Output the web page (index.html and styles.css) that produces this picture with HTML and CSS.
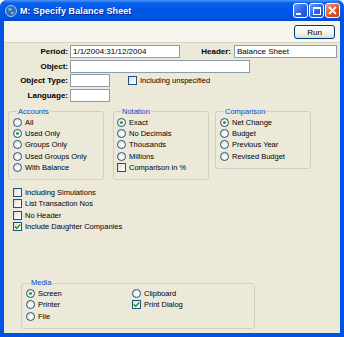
FILE: index.html
```html
<!DOCTYPE html>
<html lang="en">
<head>
    <meta charset="UTF-8">
    <title>M: Specify Balance Sheet</title>
    <link rel="stylesheet" href="styles.css">
</head>
<body>
    <div class="window">
        <div class="titlebar">
            <svg class="app-icon" width="12" height="12" viewBox="0 0 12 12">
                <circle cx="6" cy="6" r="5.5" fill="#2f6fb8" stroke="#cfe0f5" stroke-width="0.8"/>
                <path d="M3 4 Q5 2 7 4 Q6 6 4 6 Z M6 7 Q8 6 9 8 Q7 10 6 9 Z" fill="#7fb6e0"/>
            </svg>
            <span class="title">M: Specify Balance Sheet</span>
            <div class="tbtns">
                <span class="tbtn"><span class="min-glyph"></span></span>
                <span class="tbtn"><span class="max-glyph"></span></span>
                <span class="tbtn close">
                    <svg width="9" height="9" viewBox="0 0 9 9"><path d="M1 1 L8 8 M8 1 L1 8" stroke="#fff" stroke-width="1.8"/></svg>
                </span>
            </div>
        </div>
        <div class="frame">
            <div class="toolbar">
                <button class="btn">Run</button>
            </div>
            <div class="content">
                <div class="fields">
                    <label class="lbl">Period:</label>
                    <div class="row">
                        <input class="inp w-period" type="text" value="1/1/2004:31/12/2004">
                        <label class="lbl grow">Header:</label>
                        <input class="inp w-header" type="text" value="Balance Sheet">
                    </div>
                    <label class="lbl">Object:</label>
                    <div class="row"><input class="inp w-object" type="text"></div>
                    <label class="lbl">Object Type:</label>
                    <div class="row">
                        <input class="inp w-small" type="text">
                        <span class="opt unspec"><span class="chk"></span>Including unspecified</span>
                    </div>
                    <label class="lbl">Language:</label>
                    <div class="row"><input class="inp w-small" type="text"></div>
                </div>

                <div class="groups">
                    <fieldset class="box accounts">
                        <legend>Accounts</legend>
                        <span class="opt"><span class="rad"></span>All</span>
                        <span class="opt"><span class="rad on"></span>Used Only</span>
                        <span class="opt"><span class="rad"></span>Groups Only</span>
                        <span class="opt"><span class="rad"></span>Used Groups Only</span>
                        <span class="opt"><span class="rad"></span>With Balance</span>
                    </fieldset>
                    <fieldset class="box notation">
                        <legend>Notation</legend>
                        <span class="opt"><span class="rad on"></span>Exact</span>
                        <span class="opt"><span class="rad"></span>No Decimals</span>
                        <span class="opt"><span class="rad"></span>Thousands</span>
                        <span class="opt"><span class="rad"></span>Millions</span>
                        <span class="opt"><span class="chk"></span>Comparison in %</span>
                    </fieldset>
                    <fieldset class="box comparison">
                        <legend>Comparison</legend>
                        <span class="opt"><span class="rad on"></span>Net Change</span>
                        <span class="opt"><span class="rad"></span>Budget</span>
                        <span class="opt"><span class="rad"></span>Previous Year</span>
                        <span class="opt"><span class="rad"></span>Revised Budget</span>
                    </fieldset>
                </div>

                <div class="checks">
                    <span class="opt"><span class="chk"></span>Including Simulations</span>
                    <span class="opt"><span class="chk"></span>List Transaction Nos</span>
                    <span class="opt"><span class="chk"></span>No Header</span>
                    <span class="opt"><span class="chk">
                        <svg width="7" height="7" viewBox="0 0 7 7"><path d="M0.8 3.4 L2.7 5.3 L6.2 1.4" fill="none" stroke="#21a121" stroke-width="1.5"/></svg>
                    </span>Include Daughter Companies</span>
                </div>

                <fieldset class="box media">
                    <legend>Media</legend>
                    <div class="media-grid">
                        <span class="opt"><span class="rad on"></span>Screen</span>
                        <span class="opt"><span class="rad"></span>Clipboard</span>
                        <span class="opt"><span class="rad"></span>Printer</span>
                        <span class="opt"><span class="chk">
                            <svg width="7" height="7" viewBox="0 0 7 7"><path d="M0.8 3.4 L2.7 5.3 L6.2 1.4" fill="none" stroke="#21a121" stroke-width="1.5"/></svg>
                        </span>Print Dialog</span>
                        <span class="opt"><span class="rad"></span>File</span>
                    </div>
                </fieldset>
            </div>
        </div>
    </div>
</body>
</html>
```

FILE: styles.css
```css
* {
    margin: 0;
    padding: 0;
    box-sizing: border-box;
}

body {
    width: 344px;
    height: 337px;
    background: #fff;
    font-family: 'Liberation Sans', Arial, sans-serif;
    font-size: 7.5px;
    color: #000;
    overflow: hidden;
}

.window {
    width: 344px;
    height: 337px;
    display: flex;
    flex-direction: column;
    background: #0054e3;
    border-radius: 7px 7px 0 0;
    overflow: hidden;
}

/* title bar */
.titlebar {
    height: 21px;
    flex: none;
    display: flex;
    align-items: center;
    padding: 0 4px 0 5px;
    background: linear-gradient(to bottom, #4b97fb 0%, #0a61ed 14%, #0058e6 45%, #0056e4 80%, #0347cf 100%);
}

.app-icon {
    flex: none;
    margin-right: 3px;
}

.title {
    flex: 1;
    color: #fff;
    font-size: 9px;
    font-weight: bold;
    text-shadow: 1px 1px 0 #0a1e8a;
    letter-spacing: 0.1px;
}

.tbtns {
    display: flex;
    gap: 1px;
}

.tbtn {
    width: 15px;
    height: 15px;
    border: 1px solid #fff;
    border-radius: 3px;
    background: linear-gradient(135deg, #6a9cf8 0%, #2a63e6 55%, #1d4fd1 100%);
    display: flex;
    align-items: center;
    justify-content: center;
    position: relative;
}

.tbtn.close {
    background: linear-gradient(135deg, #f09a7c 0%, #e0552e 55%, #c63b14 100%);
}

.min-glyph {
    width: 5px;
    height: 2px;
    background: #fff;
    margin: 6px 4px 0 0;
}

.max-glyph {
    width: 8px;
    height: 8px;
    border: 1px solid #fff;
    border-top-width: 2px;
}

/* frame around the client area */
.frame {
    flex: 1;
    display: flex;
    flex-direction: column;
    margin: 0 4px 4px 4px;
    background: #ece9d8;
}

.toolbar {
    height: 22px;
    flex: none;
    display: flex;
    justify-content: flex-end;
    align-items: flex-start;
    padding: 4px 5px 0 0;
    background: #f6f5f0;
    border-bottom: 1px solid #d6d2c2;
}

.btn {
    width: 41px;
    height: 14px;
    border: 1px solid #003c74;
    border-radius: 3px;
    background: linear-gradient(to bottom, #ffffff 0%, #f3f2ec 60%, #dcd9cc 100%);
    font-family: 'Liberation Sans', Arial, sans-serif;
    font-size: 8px;
    color: #000;
}

.content {
    flex: 1;
    padding: 2px 3px 0 2px;
}

/* header fields */
.fields {
    display: grid;
    grid-template-columns: 62px 1fr;
    column-gap: 2px;
    row-gap: 1.6px;
}

.lbl {
    font-weight: bold;
    font-size: 8px;
    text-align: right;
    line-height: 13px;
    white-space: nowrap;
}

.row {
    display: flex;
    align-items: center;
    height: 13px;
}

.lbl.grow {
    flex: 1;
    padding-right: 3px;
}

.inp {
    height: 13px;
    border: 1px solid #8d9cab;
    background: #fff;
    font-family: 'Liberation Sans', Arial, sans-serif;
    font-size: 8px;
    padding: 0 2px;
    outline: none;
    color: #000;
}

.w-period { width: 110px; }
.w-header { width: 103px; }
.w-object { width: 180px; }
.w-small { width: 40px; }

.unspec {
    margin-left: 18px;
}

/* options */
.opt {
    display: flex;
    align-items: center;
    gap: 3px;
    height: 11.25px;
    white-space: nowrap;
}

.rad {
    width: 9px;
    height: 9px;
    flex: none;
    border: 1px solid #1e5187;
    border-radius: 50%;
    background: radial-gradient(circle at 65% 65%, #ffffff 0%, #f2f1eb 50%, #d8d6cc 100%);
    display: flex;
    align-items: center;
    justify-content: center;
}

.rad.on::after {
    content: "";
    width: 3px;
    height: 3px;
    border-radius: 50%;
    background: #22a522;
}

.chk {
    width: 9px;
    height: 9px;
    flex: none;
    border: 1px solid #1e5187;
    background: linear-gradient(135deg, #dcdbd3 0%, #f5f4ef 60%, #ffffff 100%);
    display: flex;
    align-items: center;
    justify-content: center;
}

/* group boxes */
.groups {
    display: flex;
    align-items: flex-start;
    margin-top: 5px;
    padding-left: 2px;
}

.box {
    border: 1px solid #d0d0bf;
    border-radius: 3px;
    padding: 0 4px 6px 4px;
    width: 96px;
    min-width: 0;
}

.box legend {
    color: #0046d5;
    font-size: 7.5px;
    line-height: 10px;
    padding: 0 1px;
    margin-left: 4px;
}

.notation {
    margin-left: 9px;
    padding-left: 3px;
}

.comparison {
    margin-left: 6px;
}

.checks {
    margin-top: 7px;
    padding-left: 7px;
}

.media {
    width: 234px;
    margin: 46px 0 0 15px;
}

.media-grid {
    display: grid;
    grid-template-columns: 106px 1fr;
}
```
